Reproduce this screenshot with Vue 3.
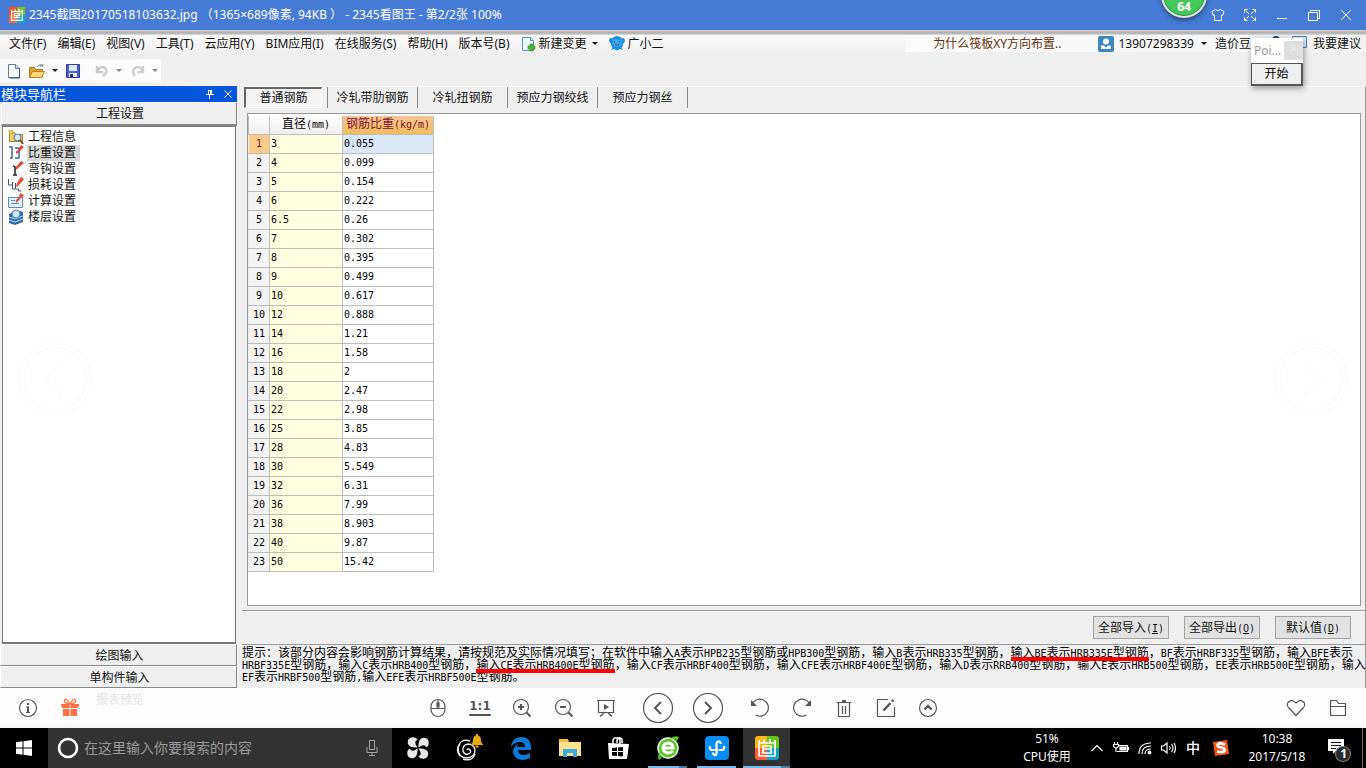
<script setup>
const menus = ['文件(F)', '编辑(E)', '视图(V)', '工具(T)', '云应用(Y)', 'BIM应用(I)', '在线服务(S)', '帮助(H)', '版本号(B)']
const navItems = ['工程信息', '比重设置', '弯钩设置', '损耗设置', '计算设置', '楼层设置']
const tabs = ['普通钢筋', '冷轧带肋钢筋', '冷轧扭钢筋', '预应力钢绞线', '预应力钢丝']
const rows = [
  ['3', '0.055'], ['4', '0.099'], ['5', '0.154'], ['6', '0.222'], ['6.5', '0.26'], ['7', '0.302'],
  ['8', '0.395'], ['9', '0.499'], ['10', '0.617'], ['12', '0.888'], ['14', '1.21'], ['16', '1.58'],
  ['18', '2'], ['20', '2.47'], ['22', '2.98'], ['25', '3.85'], ['28', '4.83'], ['30', '5.549'],
  ['32', '6.31'], ['36', '7.99'], ['38', '8.903'], ['40', '9.87'], ['50', '15.42']
]
const buttons = [['全部导入', 'I'], ['全部导出', 'O'], ['默认值', 'D']]
// Segments wrapped in * are underlined in red.
const hintLines = [
  '提示：该部分内容会影响钢筋计算结果，请按规范及实际情况填写；在软件中输入A表示HPB235型钢筋或HPB300型钢筋，输入B表示HRB335型钢筋，*输入BE表示HRB335E型钢筋*，BF表示HRBF335型钢筋，输入BFE表示',
  'HRBF335E型钢筋，输入C表示HRB400型钢筋，*输入CE表示HRB400E型钢筋*，输入CF表示HRBF400型钢筋，输入CFE表示HRBF400E型钢筋，输入D表示RRB400型钢筋，输入E表示HRB500型钢筋，EE表示HRB500E型钢筋，输入',
  'EF表示HRBF500型钢筋,输入EFE表示HRBF500E型钢筋。'
].map(line => line.split('*').map((text, i) => ({
  marked: i % 2 === 1,
  parts: text.split(/([A-Z0-9,]+)/).filter(Boolean).map(t => ({ t, latin: /^[A-Z0-9,]/.test(t) }))
})))
</script>

<template>
  <div class="screen">
    <header class="titlebar">
      <svg class="logo" width="16" height="16" viewBox="0 0 24 24">
        <path fill="#f4511e" d="M0 0h12v12H0z" /><path fill="#7cc21a" d="M12 0h12v12H12z" />
        <path fill="#fb6b3c" d="M0 12h12v12H0z" /><path fill="#12a5c9" d="M12 12h12v12H12z" />
        <path fill="none" stroke="#fff" stroke-width="1.8" d="M4 4v16h16V4M4 7h16M9 3v4m6-4v4M8 10h8v3H8zM7 16h10M12 13v3" />
      </svg>
      <h1>2345截图20170518103632.jpg （1365×689像素, 94KB ） - 2345看图王 - 第2/2张 100%</h1>
      <div class="badge">64</div>
      <div class="win-buttons">
        <button aria-label="皮肤"><svg width="14" height="14" viewBox="0 0 14 14"><path d="M4.500 1.500q2.500 2.500 5 0l3.500 2-1 3.500h-1.500v5.500h-7V7H2L1 3.500z" /></svg></button>
        <button aria-label="全屏"><svg width="14" height="14" viewBox="0 0 14 14"><path d="M1.500 4.500v-3h3M9.500 1.500h3v3M12.500 9.500v3h-3M4.500 12.500h-3v-3M2 2l4 4M12 2L8 6M2 12l4-4M12 12L8 8" /></svg></button>
        <button aria-label="最小化"><svg width="14" height="14" viewBox="0 0 14 14"><path d="M2 10.500h10" /></svg></button>
        <button aria-label="还原"><svg width="14" height="14" viewBox="0 0 14 14"><path d="M1.500 4.500h9v8h-9zM3.500 4V2.500h9v8H11" /></svg></button>
        <button aria-label="关闭"><svg width="14" height="14" viewBox="0 0 14 14"><path d="M2 2l10 10M12 2L2 12" /></svg></button>
      </div>
    </header>

    <main class="app">
      <nav class="menubar">
        <button v-for="m in menus" :key="m">{{ m }}</button>
        <button class="with-icon">
          <svg width="15" height="16" viewBox="0 0 15 16"><path fill="#eef6fd" stroke="#5a93c6" d="M1.500 1.500h8l3 3v10h-11z" /><path fill="#c8e0f4" stroke="#5a93c6" d="M9.500 1.500v3h3" /><path fill="#4cb531" stroke="#2f8a22" stroke-width=".6" d="M9 8h3v2h2v3h-2v2H9v-2H7v-3h2z" /></svg>
          新建变更<i class="caret"></i>
        </button>
        <button class="with-icon">
          <svg width="16" height="15" viewBox="0 0 16 15"><path fill="#1b8cdc" d="M3 2.500Q5 0 8 0t5 2.500l2-.5q1.500 2 .5 4L14 8q0 2-1.500 3.500L14 14l-3-1-3 1.500L5 13l-3 1 1.500-2.500Q2 10 2 8L.5 6Q-.5 4 1 2z" /><path fill="#3fa9ec" d="M3.500 4Q8 2 12.500 4q.5 4-1.500 6-3 2-6 0-2-2-1.500-6z" /><path stroke="#0d4f94" fill="none" d="M5.500 5v1.500m5-1.500v1.500M6 8.500q2 1.500 4 0" /></svg>
          广小二
        </button>
        <div class="account">
          <a class="question" href="#">为什么筏板XY方向布置..</a>
          <button class="with-icon user">
            <svg width="16" height="16" viewBox="0 0 16 16"><rect width="16" height="16" rx="2" fill="#3b87bd" /><circle cx="8" cy="5.500" r="3" fill="#fff" /><path fill="#fff" d="M3 13V9.500h3l2 2 2-2h3V13z" /></svg>
            13907298339<i class="caret"></i>
          </button>
          <button class="beans">造价豆</button>
          <svg class="glimpse" width="38" height="16" viewBox="0 0 38 16"><circle cx="6" cy="4" r="4" fill="#1b4b80" /><path fill="#dcebf8" stroke="#4d7fc0" d="M22.500 .5h14v11h-6l-3 3v-3h-5z" /></svg>
          <button>我要建议</button>
        </div>
      </nav>

      <div class="toolbar">
        <button aria-label="新建"><svg width="16" height="16" viewBox="0 0 16 16"><path fill="#fff" stroke="#65799b" d="M2.500 1.500h7l4 4v9h-11z" /><path fill="#cbdcf0" stroke="#65799b" d="M9.500 1.500v4h4" /><path stroke="#36507c" d="M13.500 5v10h-10" fill="none" /></svg></button>
        <button aria-label="打开"><svg width="18" height="16" viewBox="0 0 18 16"><path fill="#e2a72f" stroke="#a87820" d="M1.500 14V4.500h5l1 2h7V14z" /><path fill="#fcd775" stroke="#b68326" d="M1.500 14.500l3-6h12l-3 6z" /><path fill="none" stroke="#6680a8" d="M9 4q3-4 6-1v-2m0 2h-3" /></svg></button>
        <i class="caret"></i>
        <button class="save" aria-label="保存"><svg width="16" height="16" viewBox="0 0 16 16"><path fill="#4a62cc" stroke="#2f3f9c" d="M1.500 1.500h13v13h-13z" /><path fill="#dbe7fa" d="M4 2h8v6H4z" /><path fill="#eef" d="M4 10h8v4H4z" /><path fill="#27348c" d="M5 11h3v3H5z" /></svg></button>
        <span class="divider"></span>
        <button aria-label="撤销"><svg width="16" height="16" viewBox="0 0 16 16"><path fill="none" stroke="#c9c9c9" stroke-width="2.400" d="M3 3v6h6M3 8q4-6 8-3t-2 8" /></svg></button>
        <i class="caret gray"></i>
        <button aria-label="重做"><svg width="16" height="16" viewBox="0 0 16 16"><path fill="none" stroke="#cfcfcf" stroke-width="2.400" d="M13 3v6H7M13 8Q9 2 5 5t0 8" /></svg></button>
        <i class="caret gray"></i>
      </div>

      <div class="workspace">
        <aside class="sidebar">
          <div class="side-title">
            <span>模块导航栏</span>
            <button aria-label="固定"><svg width="10" height="10" viewBox="0 0 10 10"><path d="M3.500 1v4.500M3 1.500h4M6.500 1v4.500M5.500 1v4M1 5.500h8M4.500 6v4" /></svg></button>
            <button aria-label="关闭面板"><svg width="10" height="10" viewBox="0 0 10 10"><path d="M1.500 1.500l7 7M8.500 1.500l-7 7" /></svg></button>
          </div>
          <button class="section first">工程设置</button>
          <ul class="nav-list">
            <li v-for="(n, i) in navItems" :key="n">
              <svg v-if="i === 0" width="16" height="16" viewBox="0 0 16 16"><path fill="#f3cf6a" stroke="#a98031" d="M1.500 3.500h5l1 2h7v7h-13z" /><path fill="#fff3a0" stroke="#d6a829" d="M1 1l2 1 2-1-1 2 1 2-2-1-2 1 1-2z" /><circle cx="9.500" cy="8.500" r="3.500" fill="#cde8fb" stroke="#5d718c" /><path stroke="#754d1c" stroke-width="2" d="M12 11l3 4" /></svg>
              <svg v-else-if="i === 1" width="16" height="16" viewBox="0 0 16 16"><path fill="none" stroke="#47679b" stroke-width="1.500" d="M1 2h3v11H2M7 3h4v4H8m3 0v6H7" /><path fill="#df4a36" d="M13 0l3 2-6 6-2 1 1-3z" /></svg>
              <svg v-else-if="i === 2" width="16" height="16" viewBox="0 0 16 16"><path fill="#df4a36" d="M13 0l3 2-7 6-2 1 1-3z" /><path fill="none" stroke="#222" stroke-width="1.500" d="M5 5l2 1v8m-2 0h4" /></svg>
              <svg v-else-if="i === 3" width="16" height="16" viewBox="0 0 16 16"><path fill="none" stroke="#47566e" d="M.5 2v6h4V5m0 3v4h3V6m0 6h3v2h3" /><path fill="#df4a36" d="M13 0l3 2-6 7-2 1 1-4z" /></svg>
              <svg v-else-if="i === 4" width="16" height="16" viewBox="0 0 16 16"><path fill="#e8f2fd" stroke="#5b8bcb" d="M.5 4.500h14v10H.5z" /><path stroke="#5b8bcb" d="M3 7.500h4m-4 3h8" /><path stroke="#c9573e" stroke-width="2" d="M14 2l-6 7" /><path fill="#e0503e" d="M12 0l4 2-2 3-3-2z" /></svg>
              <svg v-else width="16" height="16" viewBox="0 0 16 16"><path fill="#2d6daa" d="M1 5l8-4 6 2v10l-8 3-6-2z" /><path fill="none" stroke="#b9dcf6" d="M1 8l6 2 8-3M1 11l6 2 8-3" /><circle cx="8" cy="5" r="4" fill="#cfe6f7" stroke="#4f82ae" /></svg>
              <button :class="{ on: i === 1 }">{{ n }}</button>
            </li>
          </ul>
          <button class="section">绘图输入</button>
          <button class="section">单构件输入</button>
        </aside>

        <section class="panel">
          <div class="tabs">
            <button v-for="(t, i) in tabs" :key="t" :class="{ current: i === 0 }"><span>{{ t }}</span></button>
          </div>
          <div class="sheet">
            <table>
              <thead>
                <tr><th class="num"></th><th class="dia">直径<b>(mm)</b></th><th class="wt">钢筋比重<b>(kg/m)</b></th></tr>
              </thead>
              <tbody>
                <tr v-for="(r, i) in rows" :key="i" :class="{ sel: i === 0 }">
                  <th>{{ i + 1 }}</th><td class="dia">{{ r[0] }}</td><td>{{ r[1] }}</td>
                </tr>
              </tbody>
            </table>
          </div>
          <div class="actions">
            <button v-for="b in buttons" :key="b[1]">{{ b[0] }}<b>(<u>{{ b[1] }}</u>)</b></button>
          </div>
          <div class="hint">
            <p v-for="(line, i) in hintLines" :key="i"><span v-for="(seg, j) in line" :key="j" :class="{ marked: seg.marked }"><span v-for="(p, k) in seg.parts" :key="k" :class="{ latin: p.latin }">{{ p.t }}</span></span></p>
          </div>
        </section>
      </div>

      <button class="pager prev" aria-label="上一张"><svg width="74" height="74" viewBox="0 0 74 74"><circle cx="37" cy="37" r="36" /><circle cx="37" cy="37" r="31" /><path d="M44 20L27 37l17 17" /></svg></button>
      <button class="pager next" aria-label="下一张"><svg width="74" height="74" viewBox="0 0 74 74"><circle cx="37" cy="37" r="36" /><circle cx="37" cy="37" r="31" /><path d="M30 20l17 17-17 17" /></svg></button>

      <div class="popup">
        <div class="popup-title"><span>Poi...</span><i>×</i></div>
        <button>开始</button>
      </div>
    </main>

    <footer class="viewer">
      <span class="ghost">报表预览</span>
      <div class="group left">
        <button aria-label="信息"><svg width="20" height="20" viewBox="0 0 20 20"><circle cx="10" cy="10" r="8.500" /><path stroke-width="2" d="M10 5v2M10 8.500V15" /><path d="M8 9h2M8 14.500h4" /></svg></button>
        <button aria-label="礼物" class="gift"><svg width="20" height="20" viewBox="0 0 20 20"><path fill="#ff6f43" stroke="none" d="M1 6h8.500v4H2V8.500H1zM10.500 6H19v2.500h-1V10h-7.500zM3 11h6.500v7H3zM10.500 11H17v7h-6.500z" /><path d="M10 6Q3 5 4.500 2T10 6q4-7 5.500-4T10 6" /></svg></button>
      </div>
      <div class="group">
        <button aria-label="鼠标"><svg width="20" height="20" viewBox="0 0 20 20"><rect x="3" y="1.500" width="14" height="17" rx="7" /><path d="M3 10.500h14M10 2v3" /><rect x="9" y="5" width="2" height="4" fill="#555" /></svg></button>
        <button class="ratio">1:1</button>
        <button aria-label="放大"><svg width="20" height="20" viewBox="0 0 20 20"><circle cx="9" cy="9" r="7.500" /><path stroke-width="2" d="M6 9h6M9 6v6M14.500 14.500l4 4" /></svg></button>
        <button aria-label="缩小"><svg width="20" height="20" viewBox="0 0 20 20"><circle cx="9" cy="9" r="7.500" /><path stroke-width="2" d="M6 9h6M14.500 14.500l4 4" /></svg></button>
        <button aria-label="幻灯片"><svg width="20" height="20" viewBox="0 0 20 20"><path d="M1 2.500h18M2.500 3v11.500h15V3" /><path stroke-width="1.600" d="M4 18.500l4-3.500M16 18.500L12 15" /><path fill="#555" stroke="none" d="M8 6l5 3-5 3z" /></svg></button>
        <span class="pair">
          <button aria-label="向前"><svg width="30" height="30" viewBox="0 0 30 30"><circle cx="15" cy="15" r="14.500" /><path stroke-width="2" d="M18 9l-6 6 6 6" /></svg></button>
          <button aria-label="向后"><svg width="30" height="30" viewBox="0 0 30 30"><circle cx="15" cy="15" r="14.500" /><path stroke-width="2" d="M12 9l6 6-6 6" /></svg></button>
        </span>
        <button aria-label="左旋"><svg width="20" height="20" viewBox="0 0 20 20"><path d="M2 6.500A8.500 8.500 0 1 1 5.500 17" /><path fill="#555" stroke="none" d="M1 2v6h6z" /></svg></button>
        <button aria-label="右旋"><svg width="20" height="20" viewBox="0 0 20 20"><path d="M18 6.500A8.500 8.500 0 1 0 14.500 17" /><path fill="#555" stroke="none" d="M19 2v6h-6z" /></svg></button>
        <button aria-label="删除"><svg width="20" height="20" viewBox="0 0 20 20"><path d="M2.500 4.500h15M4.500 5v13.500h11V5M8.500 8v8M11.500 8v8" /><path stroke-width="2" d="M8 3h4" /></svg></button>
        <button aria-label="编辑"><svg width="20" height="20" viewBox="0 0 20 20"><path d="M12 1.500H1.500v17h17V9" /><path stroke-width="2.500" d="M7.500 12.500l7-7.500M16 3.500l1.500-1.500" /></svg></button>
        <button aria-label="更多"><svg width="20" height="20" viewBox="0 0 20 20"><circle cx="10" cy="10" r="8.500" /><path stroke-width="2.400" d="M6.500 11.500L10 8l3.500 3.500" /></svg></button>
      </div>
      <div class="group right">
        <button aria-label="收藏"><svg width="20" height="20" viewBox="0 0 20 20"><path d="M10 17.500L2.500 9.500Q.5 7 2 4.500 5.500.5 10 5q4.500-4.500 8-.5 1.500 2.500-.5 5z" /></svg></button>
        <button aria-label="文件夹"><svg width="20" height="20" viewBox="0 0 20 20"><path d="M2.500 17.500v-15h6l2 3h7v12zM2.500 8.500h15" /></svg></button>
      </div>
    </footer>

    <div class="taskbar">
      <button class="start" aria-label="开始菜单"><svg width="16" height="16" viewBox="0 0 16 16"><path fill="#fff" d="M0 2.300l6.500-1v6.200H0zM7.500 1.200L16 0v7.500H7.500zM0 8.500h6.500v6.200L0 13.700zM7.500 8.500H16V16l-8.500-1.200z" /></svg></button>
      <label class="search">
        <svg width="22" height="22" viewBox="0 0 22 22"><circle cx="11" cy="11" r="9" fill="none" stroke="#fff" stroke-width="2.600" /></svg>
        <input type="text" aria-label="搜索" placeholder="在这里输入你要搜索的内容">
        <svg width="14" height="18" viewBox="0 0 14 18"><path fill="none" stroke="#a5a5a5" d="M4.500 1.500h5v9h-5zM2 8v5.500h10V8M7 14v3M4 16.500h6" /></svg>
      </label>
      <div class="tasks">
        <button aria-label="风扇"><svg width="22" height="22" viewBox="0 0 22 22"><g fill="#e8e8e8"><path d="M10.500 10.500Q3 11 1 7 0 2 4 .5 9-.5 10.500 3 6 4 10.500 10.500z" /><path transform="rotate(90 11 11)" d="M10.500 10.500Q3 11 1 7 0 2 4 .5 9-.5 10.500 3 6 4 10.500 10.500z" /><path transform="rotate(180 11 11)" d="M10.500 10.500Q3 11 1 7 0 2 4 .5 9-.5 10.500 3 6 4 10.500 10.500z" /><path transform="rotate(270 11 11)" d="M10.500 10.500Q3 11 1 7 0 2 4 .5 9-.5 10.500 3 6 4 10.500 10.500z" /></g></svg></button>
        <button aria-label="提醒"><svg width="28" height="30" viewBox="0 0 28 30"><g fill="none" stroke="#e8e8e8" stroke-width="1.400"><path d="M14 8Q4 5 2 15q0 10 9 10 8-1 8-8-1-6-7-6-6 1-5 7 1 4 5 3 4-1 2-4-2-2-3 0" /><path d="M4 11Q-1 17 4 23m3 3q9 3 12-5" /></g><path fill="#e6aa0c" d="M15 11q2-1 2-4 0-4 3-4.500V1h2v1.500q3 .5 3 4.500 0 3 2 4v1H15zM19.500 12.500h3v2h-3z" /></svg></button>
        <button aria-label="Edge"><svg width="22" height="24" viewBox="0 0 22 24"><path fill="#0a79d8" d="M1 11Q2 1 11 1q10 0 10 11v2H8q0 5 6 5 3 0 6-2v5q-3 2-8 2Q4 23 3 16 3 11 8 8L7 11h8q0-5-5-5-6 0-9 5z" /></svg></button>
        <button aria-label="资源管理器"><svg width="22" height="20" viewBox="0 0 22 20"><path fill="#f2bf42" d="M0 1h9l1 3h12v2H0z" /><path fill="#fee28b" d="M0 4h22v14H0z" /><path fill="#36afe4" d="M4 11h14v8h-4v-4H8v4H4z" /></svg></button>
        <button aria-label="商店"><svg width="22" height="24" viewBox="0 0 22 24"><path fill="none" stroke="#fff" stroke-width="1.500" d="M5 8V4q1-3 4-2l3 1v5M9 7V4q2-4 5-1v4" /><path fill="#fff" d="M0 7l21 1-2 15H1z" /><path fill="#000" d="M4 12l5-.5V15H4zM10 11.400l5-.4v4h-5zM4 16h5v4l-5-.5zM10 16h5v4.500l-5-.5z" /></svg></button>
        <button class="running split" aria-label="浏览器"><svg width="24" height="24" viewBox="0 0 24 24"><circle cx="12" cy="12" r="10" fill="#5cc22b" stroke="#eefbe8" stroke-width="1.500" /><path fill="none" stroke="#fff" stroke-width="3" d="M7 12h10q0-5-5-5-5 1-5 5t5 5q3 0 5-2" /><path fill="#4fc21c" d="M3 24Q0 19 6 14q-4 6 0 8zM13 3q6-4 10-2 0 2-3 5 1-4-7-3z" /></svg></button>
        <button class="running" aria-label="广联达"><svg width="24" height="24" viewBox="0 0 24 24"><rect width="24" height="24" rx="4" fill="#078df4" /><path fill="none" stroke="#fff" stroke-width="2.200" d="M16 8q-1-3-3-2.500-1.500.5-1.500 2.500v9q0 2.500-2 2-1.500-.5-1.500-2.500M5 10q-1 4 2.500 4h6M19 10q1 4-2.500 4H14" /></svg></button>
        <button class="running active split" aria-label="2345看图王"><svg width="24" height="24" viewBox="0 0 24 24"><path fill="#ffb511" d="M0 3q0-3 3-3h9v12H0z" /><path fill="#65c615" d="M12 0h9q3 0 3 3v9H12z" /><path fill="#ff5c35" d="M0 12h12v12H3q-3 0-3-3z" /><path fill="#129fc9" d="M12 12h12v9q0 3-3 3h-9z" /><path fill="none" stroke="#fff" stroke-width="1.700" d="M4 4v16h16V4M4 7h16M9 3v4m6-4v4M8 10h8v3H8zM7 17h10M9 13l-2 4m8-4l2 4" /></svg></button>
      </div>
      <div class="tray">
        <div class="stat cpu"><span>51%</span><span>CPU使用</span></div>
        <button aria-label="显示隐藏图标"><svg width="14" height="14" viewBox="0 0 14 14"><path d="M1.500 10L7 4.500l5.500 5.500" /></svg></button>
        <button aria-label="电源"><svg width="18" height="14" viewBox="0 0 18 14"><path d="M7 4.500h8.500v6H5M16.500 6v3M2.500 1v3M5.500 1v3M1.500 3.500h5v2l-2.500 2-2.500-2zM4 7v4" /><path fill="#fff" d="M8 6h6v3H8z" /></svg></button>
        <button aria-label="网络"><svg width="14" height="14" viewBox="0 0 14 14"><path d="M1 13Q1 2 13 2M4 13q0-8 9-8M7 13q0-5 6-5" /><circle cx="11.500" cy="11.500" r="1.300" fill="#fff" /></svg></button>
        <button aria-label="音量"><svg width="18" height="14" viewBox="0 0 18 14"><path d="M1.500 5v4h2L7 12V2L3.500 5zM9.500 5q1.500 2 0 4M11.500 3q3 4 0 8M14 2q3 5 0 10" /></svg></button>
        <button class="ime">中</button>
        <button class="sogou" aria-label="搜狗输入法"><svg width="18" height="18" viewBox="0 0 18 18"><path fill="#f55517" class="tile" d="M1 3l14-2 2 14-14 2z" /><path fill="none" class="swoosh" d="M13 5.500Q6 3 5.500 6q0 2 3.500 2.500t4 2.500q-1 3-8 1.500" /></svg></button>
        <div class="stat clock"><span>10:38</span><span>2017/5/18</span></div>
        <button class="notice" aria-label="通知"><svg width="26" height="26" viewBox="0 0 26 26"><path fill="#fff" class="tile" d="M1 2h16v12H9l-3 3v-3H1z" /><path class="lines" d="M4 5.500h10M4 8.500h10M4 11.500h5" /><circle class="count" cx="16" cy="17" r="7.500" fill="#2a2a2a" /></svg><em>1</em></button>
      </div>
    </div>
  </div>
</template>

<style>
body { margin: 0; background: #fff; }
</style>

<style scoped>
.screen { min-height: 100vh; display: flex; flex-direction: column; overflow: hidden; font: 12px/16px "Noto Sans", "Noto Sans CJK SC", sans-serif; color: #111; }
.screen * { box-sizing: border-box; }
button { appearance: none; border: 0; padding: 0; margin: 0; background: none; font: inherit; color: inherit; white-space: nowrap; }
svg { display: block; flex: none; }
b { font-weight: 400; }
.titlebar { position: relative; height: 30px; background: #467cd5; color: #fff; display: flex; align-items: center; padding: 0 6px 0 9px; }
h1 { margin: 0 auto 0 4px; font-size: 12px; font-weight: 400; white-space: nowrap; }
.win-buttons { display: flex; gap: 4px; }
.win-buttons button { width: 28px; height: 30px; display: grid; place-items: center; }
.win-buttons svg { fill: none; stroke: #fff; }
.badge { position: absolute; right: 159px; top: -28px; width: 46px; height: 46px; z-index: 3; border-radius: 50%; background: #45c65a; border: 2px solid #d8e8d8; box-shadow: inset 0 0 0 1px #25893b, 0 2px 5px #0007; text-align: center; font-weight: 700; font-size: 12px; line-height: 14px; padding-top: 26px; }

.app { position: relative; flex: 1; display: flex; flex-direction: column; background: #efefef; }
.app::before { content: ""; height: 5px; background: linear-gradient(#d4d2ce, #aeaeae 60%, #e0e0e0); }
.menubar { height: 17px; padding-left: 9px; display: flex; align-items: center; gap: 11px; background: linear-gradient(#fafafa, #f0f0f0); line-height: 15px; }
.with-icon { display: flex; align-items: center; gap: 3px; }
.caret { width: 0; height: 0; border: 3px solid transparent; border-top-color: #111; border-bottom: 0; margin-left: 2px; }
.caret.gray { border-top-color: #888; }
.account { margin-left: auto; padding-right: 5px; height: 17px; display: flex; align-items: center; background: linear-gradient(90deg, #fafafa, #f2f2f2); }
.question { color: #63300b; text-decoration: none; padding: 0 37px 0 28px; }
.user { margin-right: 8px; gap: 4px; }
.user .caret { margin-left: 3px; }
.beans { margin-right: 19px; }
.glimpse { margin-right: 5px; }
.toolbar { align-self: flex-start; width: 161px; height: 23px; margin: 7px 0 4px; padding-left: 6px; display: flex; align-items: center; background: linear-gradient(90deg, #f8f8f8, #fdfdfd); }
.toolbar button { margin-right: 6px; }
.toolbar .caret { margin: 0; }
.toolbar .save { margin: 0 6px 0 7px; }
.divider { width: 1px; height: 21px; background: #999; margin-right: 7px; }
.toolbar .gray { margin-right: 8px; }

.workspace { flex: 1; display: flex; gap: 5px; }
.sidebar { width: 237px; display: flex; flex-direction: column; }
.side-title { height: 16px; background: #0656dc; color: #fff; display: flex; align-items: center; gap: 8px; padding: 0 4px 0 1px; line-height: 15px; }
.side-title span { margin-right: auto; font-size: 13px; }
.side-title svg { fill: none; stroke: #fff; }
.section { height: 22px; border: 1px solid #fff; border-right-color: #888; border-bottom: 1px solid #888; background: #efefef; text-align: center; padding: 1px 0 0 2px; }
.section.first { height: 24px; margin-left: 1px; border-bottom-width: 2px; }
.nav-list { flex: 1; margin: 0 1px 0 2px; padding: 2px 0 0 5px; list-style: none; background: #fff; border: 1px solid #777; border-bottom-width: 2px; }
.nav-list li { display: flex; align-items: center; gap: 3px; height: 16px; }
.nav-list button { line-height: 16px; padding: 0 4px 0 1px; }
.nav-list .on { background: #d6d6d6; }

.panel { flex: 1; min-width: 0; display: flex; flex-direction: column; border-top: 1px solid #fafafa; border-right: 1px solid #999; }
.tabs { display: flex; height: 21px; padding-left: 2px; }
.tabs button { width: 90px; border-right: 1px solid #888; }
.tabs button:first-child { width: 84px; padding: 0 5px 0 0; display: flex; }
.current span { flex: 1; border: 1px solid #666; border-width: 2px 1px 1px 2px; border-right-color: #fff; border-bottom-color: #fff; background: #f3f3f3; line-height: 18px; }
.sheet { flex: 1; margin: 5px 4px 4px 5px; padding: 2px 0 0; background: #fff; border: 1px solid #999; }
table { border-collapse: collapse; table-layout: fixed; width: 186px; font: 10px/16px "DejaVu Sans Mono", "Noto Sans CJK SC", monospace; }
th, td { height: 19px; padding: 0 1px; border: 1px solid #bdbdbd; text-align: left; font-weight: 400; color: #000; }
tbody th { background: #f3f3f3; text-align: center; border-left-color: #eee; padding: 0; }
thead th { height: 18px; border-top: 0; text-align: center; font-size: 12px; background: linear-gradient(#fdfdfd, #eee); padding: 0; white-space: nowrap; }
thead b { font-size: 10px; }
.num { width: 21px; }
th.dia { width: 73px; }
td.dia { background: #ffffe0; }
thead .wt { background: linear-gradient(#f5c493, #f2bc5c); color: #7b1230; }
.sel th { background: #fbca86; color: #7b1230; }
.sel td:last-child { background: #d9e8f7; }
.actions { height: 35px; border-top: 1px solid #999; border-bottom: 1px solid #999; box-shadow: inset 0 1px #fff; display: flex; justify-content: flex-end; align-items: center; gap: 15px; padding-right: 14px; }
.actions button { width: 76px; height: 23px; border: 1px solid #a3a3a3; background: #e1e1e1; }
.actions b { font: 10px "DejaVu Sans Mono", monospace; }
.hint { height: 43px; padding-top: 1px; font: 12px/12px "Noto Sans CJK SC", sans-serif; color: #000; }
.hint p { margin: 0; height: 12px; white-space: nowrap; }
.latin { font: 10px/12px "DejaVu Sans Mono", monospace; }
.marked { position: relative; }
.marked::after { content: ""; position: absolute; left: 0; right: 0; bottom: -1px; height: 4px; background: #f00; }

.pager { position: absolute; top: 312px; }
.pager.prev { left: 18px; }
.pager.next { right: 18px; }
.pager svg { fill: none; stroke: #fcfcfc; stroke-width: 3; }
.popup { position: absolute; top: 8px; right: 63px; width: 52px; background: #fff; box-shadow: 1px 2px 6px #0006; }
.popup-title { height: 25px; display: flex; justify-content: space-between; align-items: center; color: #999; padding-left: 3px; }
.popup-title i { width: 19px; height: 19px; background: #dedede; color: #eee; text-align: center; font-style: normal; }
.popup button { width: 52px; height: 23px; border: 1px solid #555; border-width: 1px 2px 2px 1px; background: #efefef; display: block; color: #000; }

.viewer { position: relative; height: 40px; background: #fdfdfd; border-bottom: 4px solid #f8f8f8; display: grid; grid-template-columns: 1fr auto 1fr; align-items: center; padding: 0 7px; }
.viewer svg { fill: none; stroke: #555; stroke-width: 1.2; }
.group { display: flex; align-items: center; height: 40px; }
.group.right { justify-content: flex-end; }
.group button { width: 42px; height: 40px; display: grid; place-items: center; }
.group .gift svg { stroke: #ff6f43; }
.pair { display: flex; margin: 0 6px; }
.group .pair button { width: 50px; }
.group .ratio { font: 700 12px/16px "DejaVu Sans", sans-serif; color: #555; text-decoration: underline; text-decoration-thickness: 2px; text-underline-offset: 4px; padding-bottom: 4px; }
.ghost { position: absolute; left: 96px; top: 4px; color: #e2e2e2; }

.taskbar { height: 40px; background: #000; color: #fff; display: flex; }
.start { width: 48px; display: grid; place-items: center; }
.search { width: 344px; background: #333; display: flex; align-items: center; padding: 0 13px 0 9px; gap: 5px; }
.search input { flex: 1; min-width: 0; border: 0; padding: 0; background: none; font: 14px/20px "Noto Sans", "Noto Sans CJK SC", sans-serif; color: #ddd; outline: 0; }
.search input::placeholder { color: #999; opacity: 1; }
.tasks { display: flex; padding-left: 2px; gap: 4px; }
.tasks button { width: 45px; display: grid; place-items: center; position: relative; }
.tasks button:nth-child(-n+2) { width: 48px; }
.running::after { content: ""; position: absolute; left: 3px; right: 3px; bottom: 0; height: 2px; background: #76b9ed; }
.tasks .active { background: #333; width: 47px; }
.active::after { left: 0; right: 0; }
.split::after { background: linear-gradient(90deg, #76b9ed 80%, #4f7ba3 80%); }
.tray { margin-left: auto; display: flex; align-items: center; padding-right: 3px; }
.tray > button { width: 24px; display: grid; place-items: center; }
.tray svg { fill: none; stroke: #fff; stroke-width: 1.2; }
.tray .tile { stroke: none; }
.tray .swoosh { stroke-width: 2.6; }
.tray .lines { stroke: #000; }
.tray .count { stroke: #777; }
.stat { display: flex; flex-direction: column; align-items: center; line-height: 18px; }
.cpu { width: 76px; }
.clock { width: 80px; }
.tray .ime { font-size: 14px; font-weight: 500; }
.tray .sogou { width: 32px; }
.tray .notice { position: relative; width: 46px; height: 40px; border-right: 1px solid #666; padding-top: 4px; }
.notice em { position: absolute; right: 15px; top: 18px; z-index: 1; color: #fff; font: 700 12px/16px "Noto Sans", sans-serif; }
</style>
